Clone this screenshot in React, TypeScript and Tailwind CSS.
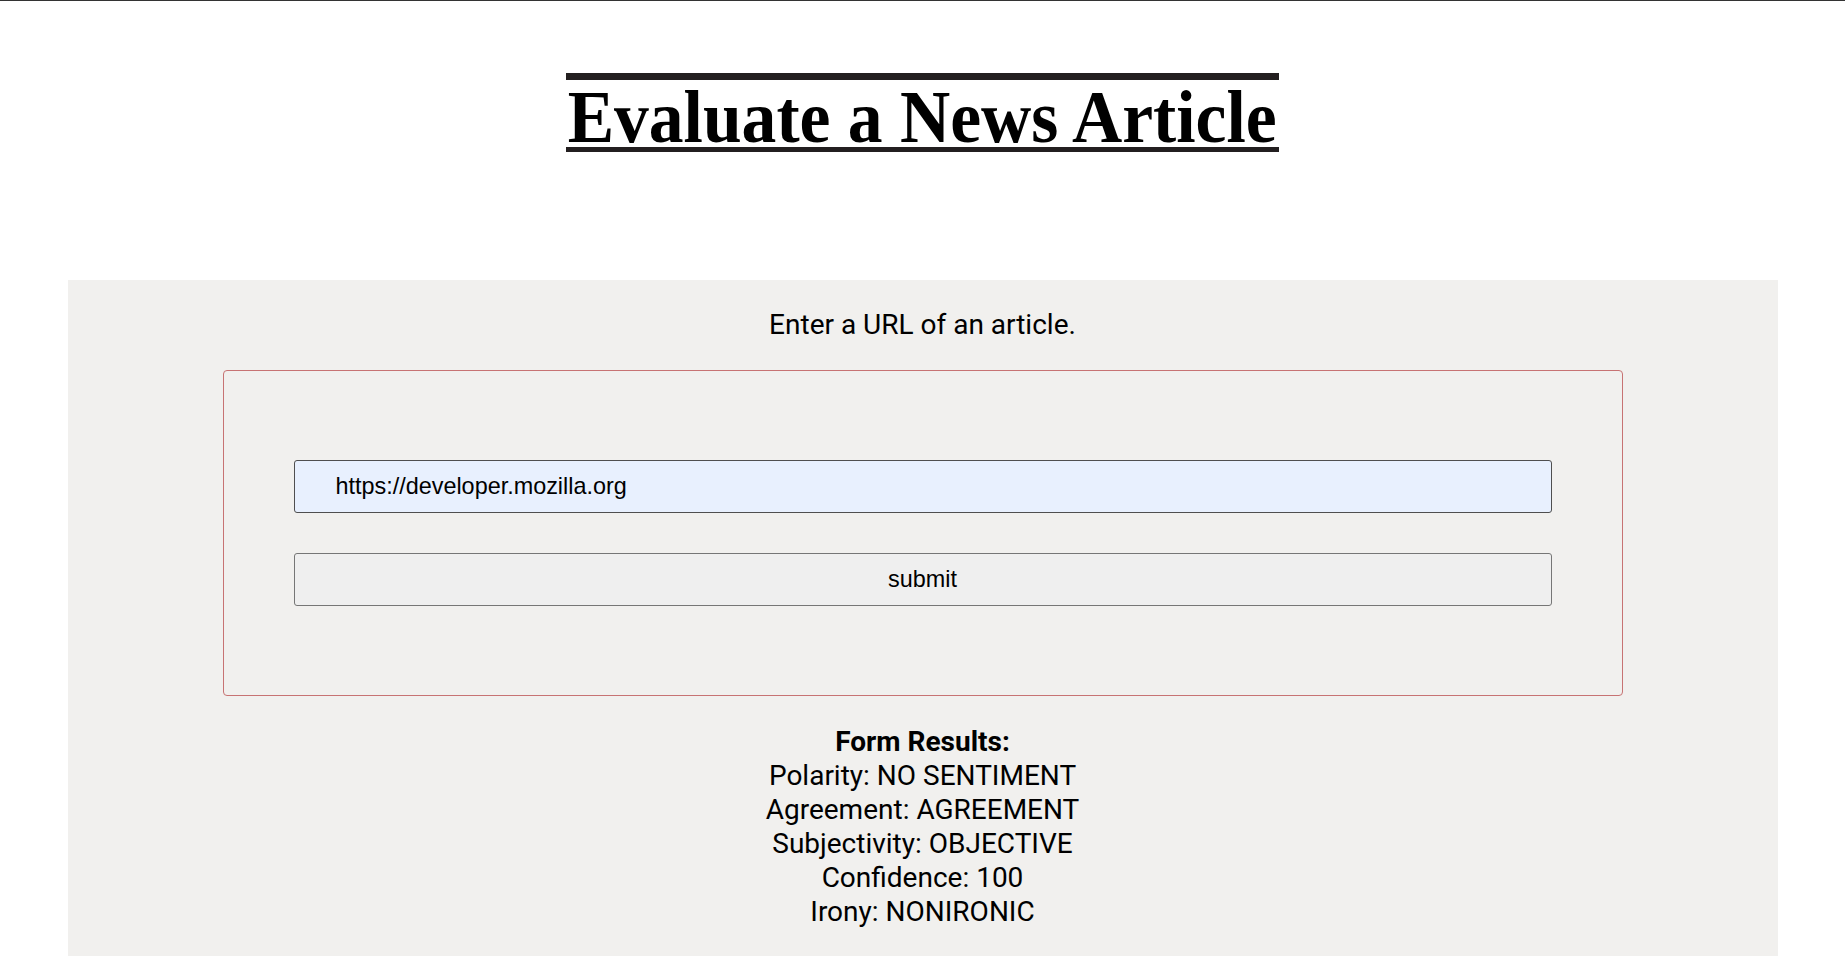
const results = [
  { label: "Polarity", value: "NO SENTIMENT" },
  { label: "Agreement", value: "AGREEMENT" },
  { label: "Subjectivity", value: "OBJECTIVE" },
  { label: "Confidence", value: "100" },
  { label: "Irony", value: "NONIRONIC" },
];

function App() {
  return (
    <div className="min-h-screen bg-white border-t border-[#333333] font-['Roboto',sans-serif] text-black">
      {/* title */}
      <header className="flex justify-center pt-[72px]">
        <h1 className="w-[713px] flex justify-center border-t-[7px] border-b-[5px] border-[#231f20]">
          <span className="block shrink-0 h-[67px] whitespace-nowrap text-[74px] leading-[74px] font-bold scale-x-[0.94] font-['Liberation_Serif','Times_New_Roman',serif]">
            Evaluate a News Article
          </span>
        </h1>
      </header>

      <main className="mt-[128px] mx-auto w-[1710px] bg-[#f1f0ee] flex flex-col items-center pt-[28px] pb-[28px]">
        <p className="text-[28px] leading-[34px]">Enter a URL of an article.</p>

        <form
          onSubmit={(e) => e.preventDefault()}
          className="mt-[28px] w-[1400px] border border-[#c77373] rounded px-[70px] py-[89px] flex flex-col gap-[40px]"
        >
          <input
            type="text"
            defaultValue="https://developer.mozilla.org"
            className="h-[53px] w-full bg-[#e8f0fe] border border-[#4f4f4f] rounded-[3px] pl-[41px] text-[23.4px] font-['Liberation_Sans',Arial,sans-serif] outline-none"
          />
          <button
            type="submit"
            className="h-[53px] w-full bg-[#efefef] border border-[#767676] rounded-[3px] text-[23.4px] font-['Liberation_Sans',Arial,sans-serif]"
          >
            submit
          </button>
        </form>

        <div className="mt-[29px] text-center text-[28px] leading-[34px]">
          <div className="font-bold">Form Results:</div>
          {results.map((r) => (
            <div key={r.label}>
              {r.label}: {r.value}
            </div>
          ))}
        </div>
      </main>
    </div>
  );
}

export default App;
